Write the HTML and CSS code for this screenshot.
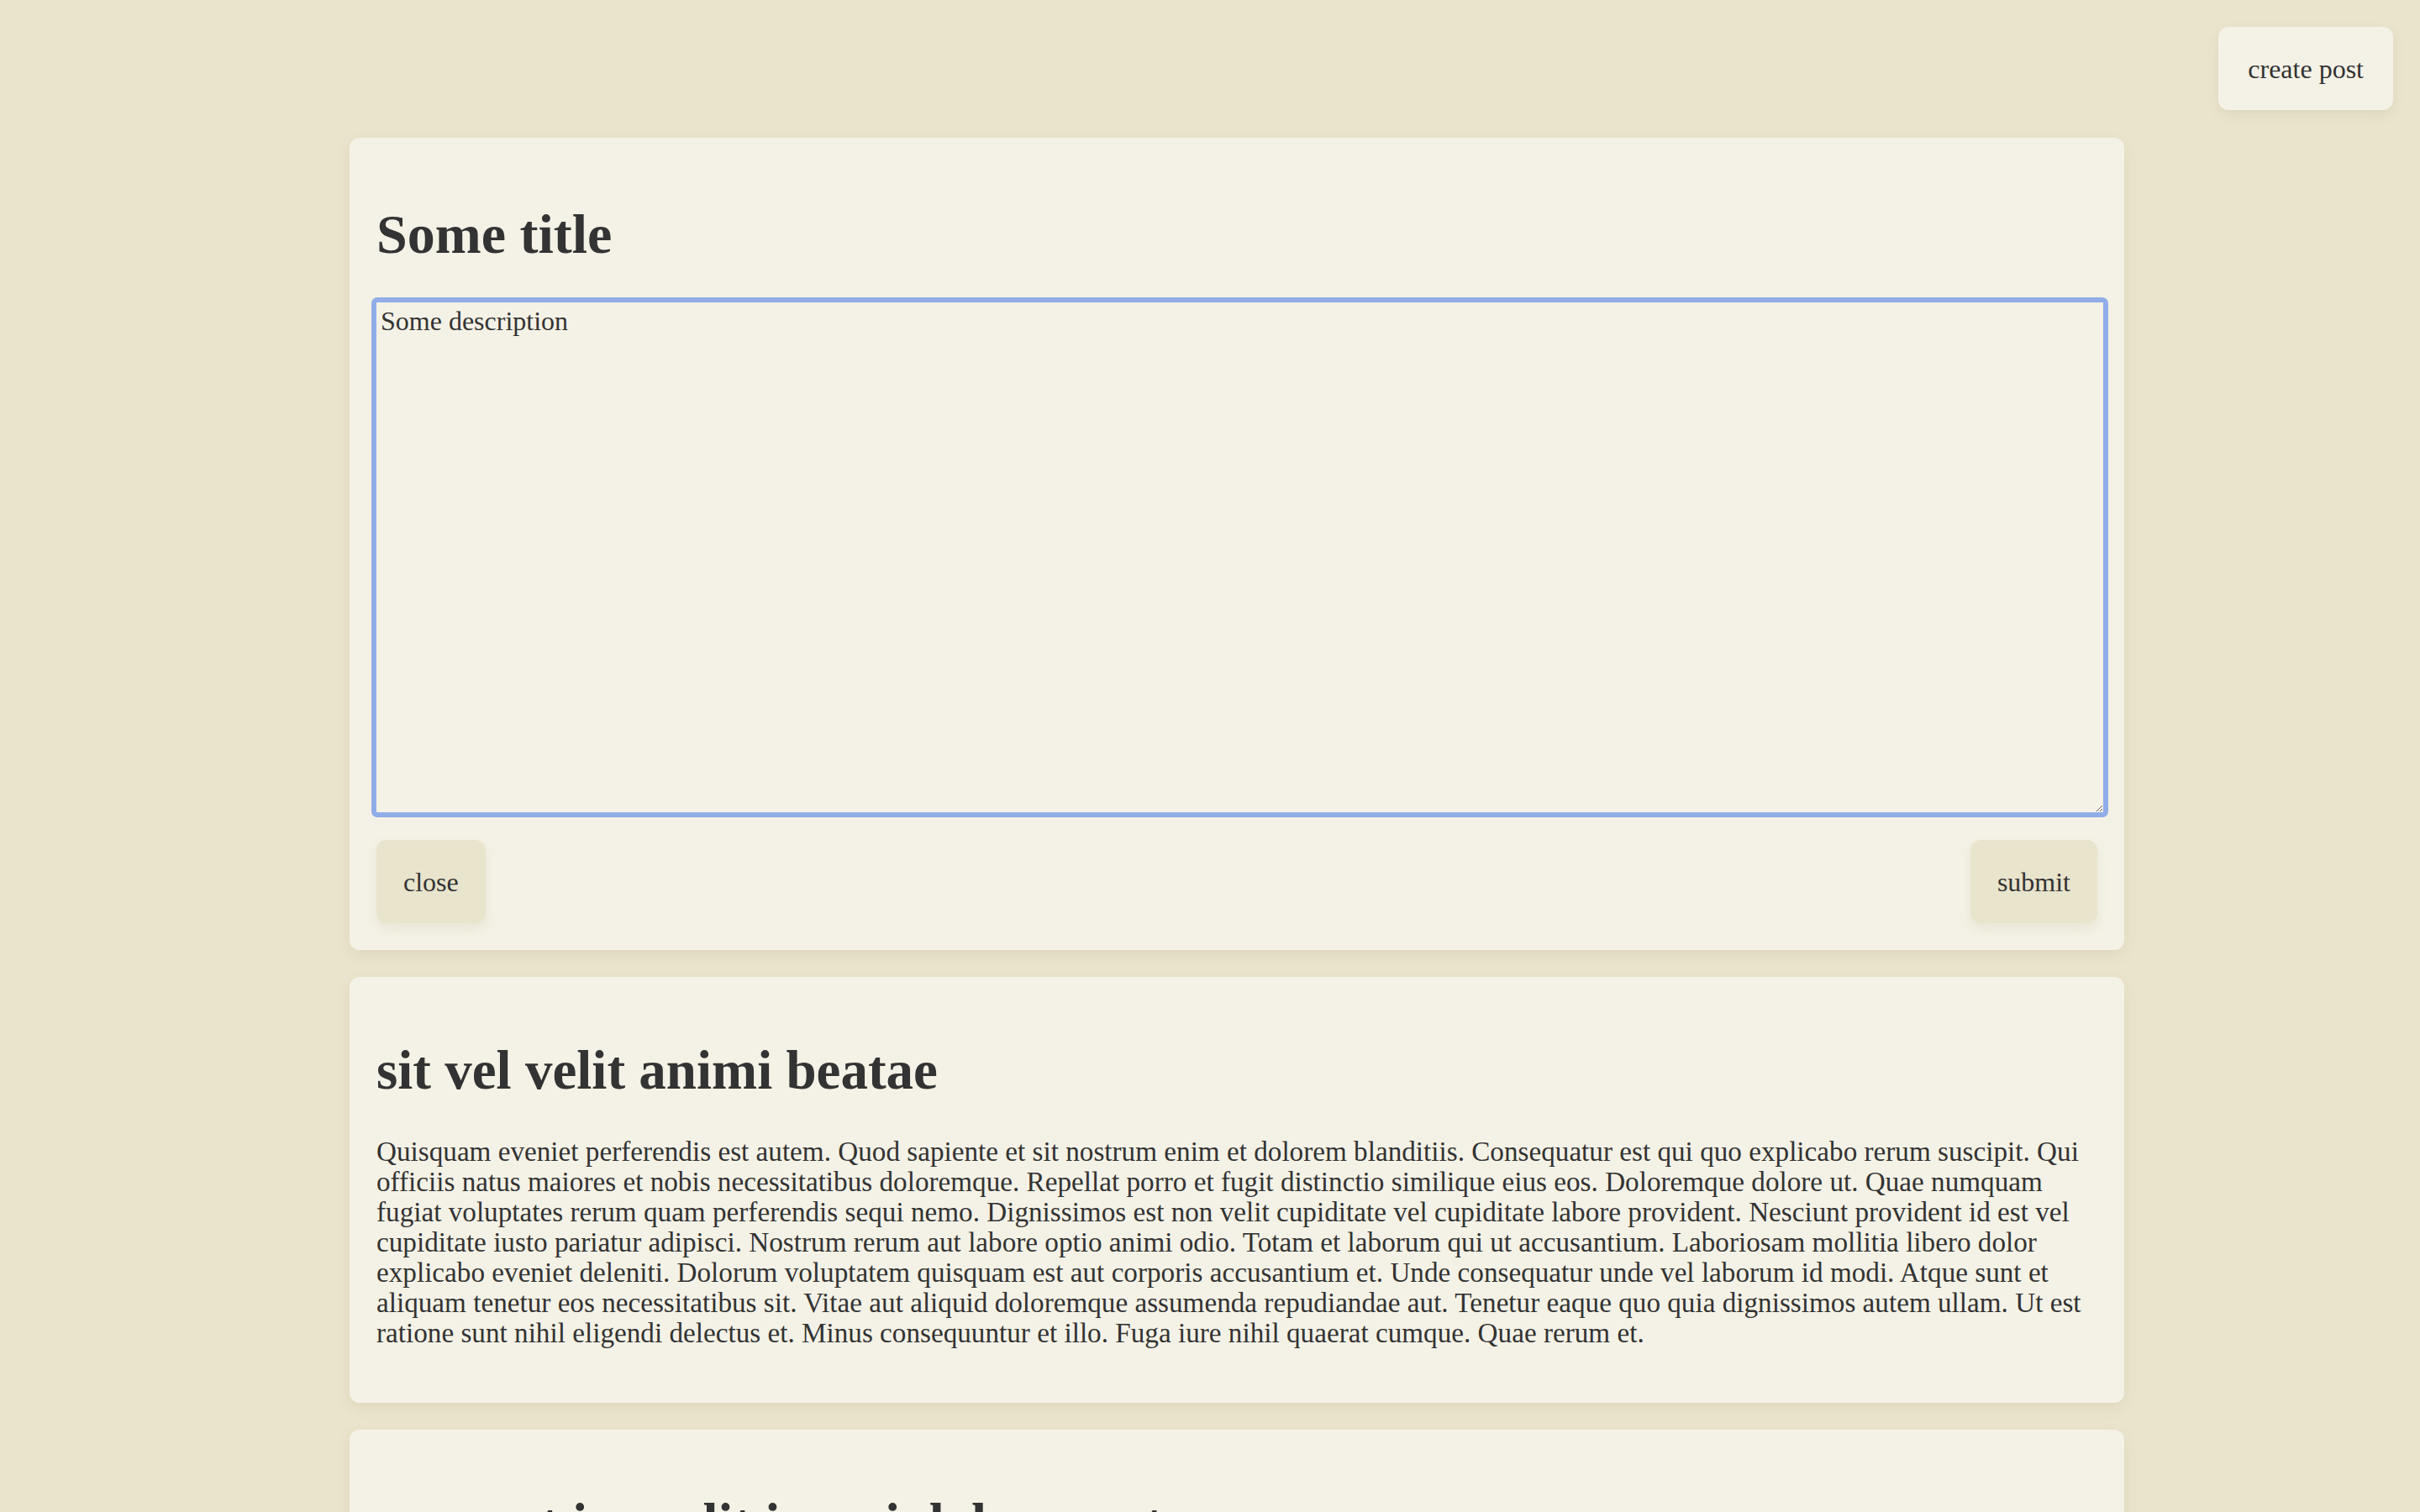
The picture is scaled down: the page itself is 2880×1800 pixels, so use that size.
FILE: index.html
```html
<!DOCTYPE html>
<html lang="en">
<head>
<meta charset="utf-8">
<title>Posts</title>
<link rel="stylesheet" href="styles.css">
</head>
<body>
<header class="topbar">
  <button class="btn btn-light btn-create">create post</button>
</header>
<main class="feed">
  <section class="card editor">
    <h1 class="post-title">Some title</h1>
    <textarea class="desc" autofocus>Some description</textarea>
    <div class="actions">
      <button class="btn btn-dark">close</button>
      <button class="btn btn-dark">submit</button>
    </div>
  </section>
  <article class="card">
    <h2 class="post-title">sit vel velit animi beatae</h2>
    <p class="post-body">Quisquam eveniet perferendis est autem. Quod sapiente et sit nostrum enim et dolorem blanditiis. Consequatur est qui quo explicabo rerum suscipit. Qui officiis natus maiores et nobis necessitatibus doloremque. Repellat porro et fugit distinctio similique eius eos. Doloremque dolore ut. Quae numquam fugiat voluptates rerum quam perferendis sequi nemo. Dignissimos est non velit cupiditate vel cupiditate labore provident. Nesciunt provident id est vel cupiditate iusto pariatur adipisci. Nostrum rerum aut labore optio animi odio. Totam et laborum qui ut accusantium. Laboriosam mollitia libero dolor explicabo eveniet deleniti. Dolorum voluptatem quisquam est aut corporis accusantium et. Unde consequatur unde vel laborum id modi. Atque sunt et aliquam tenetur eos necessitatibus sit. Vitae aut aliquid doloremque assumenda repudiandae aut. Tenetur eaque quo quia dignissimos autem ullam. Ut est ratione sunt nihil eligendi delectus et. Minus consequuntur et illo. Fuga iure nihil quaerat cumque. Quae rerum et.</p>
  </article>
  <article class="card">
    <h2 class="post-title">quaerat impedit in qui dolorem et</h2>
    <p class="post-body">Et quia dolor.</p>
  </article>
</main>
<script src="script.js"></script>
</body>
</html>
```
FILE: styles.css
```css
* { box-sizing: border-box; }
html, body { margin: 0; padding: 0; }
body {
  background: #e9e4cc;
  color: #333333;
  font-family: "Liberation Serif", "Times New Roman", serif;
  font-size: 30px;
  padding: 32px 32px 0 32px;
}
.topbar {
  display: flex;
  justify-content: flex-end;
}
.btn {
  font-family: "Liberation Serif", "Times New Roman", serif;
  font-size: 32px;
  color: #333333;
  border: none;
  border-radius: 12px;
  height: 99px;
  padding: 0 32px;
  line-height: 36px;
  cursor: pointer;
  box-shadow: 0 6px 14px rgba(140, 120, 60, 0.10);
}
.btn-create { padding: 0 35px; }
.btn-light { background: #f4f2e6; }
.btn-dark { background: #e9e4cc; }
.feed {
  display: flex;
  flex-direction: column;
  gap: 32px;
  margin: 33px 320px 0 384px;
}
.card {
  background: #f4f2e6;
  border-radius: 12px;
  padding: 32px;
  box-shadow: 0 6px 16px rgba(140, 120, 60, 0.10);
}
.post-title {
  font-size: 65px;
  font-weight: bold;
  line-height: 75px;
  margin: 42px 0 41px 0;
}
.editor .post-title {
  font-size: 66px;
  margin: 45px 0 38px 0;
}
.desc {
  display: block;
  width: calc(100% + 19px);
  margin-left: -6px;
  height: 619px;
  border: 6px solid #90ade8;
  border-radius: 7px;
  outline: none;
  background: #f4f2e6;
  color: #333333;
  font-family: "Liberation Serif", "Times New Roman", serif;
  font-size: 32px;
  line-height: 36px;
  padding: 4px 5px;
  caret-color: #333333;
}
.actions {
  display: flex;
  justify-content: space-between;
  margin-top: 27px;
}
.post-body {
  margin: 0 0 33px 0;
  font-size: 33.2px;
  line-height: 36px;
}
```
FILE: script.js
```js
var t = document.querySelector('.desc');
if (t) { t.focus(); t.setSelectionRange(t.value.length, t.value.length); }
```
